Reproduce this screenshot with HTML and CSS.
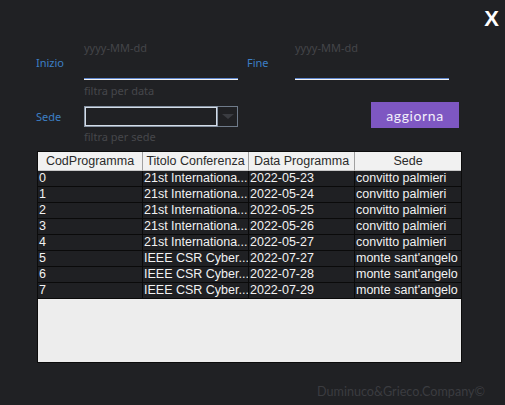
FILE: index.html
```html
<!DOCTYPE html>
<html>
<head>
<meta charset="utf-8">
<link rel="stylesheet" href="styles.css">
</head>
<body>
<div class="page">
  <div class="topbar"><span class="close">X</span></div>

  <div class="row row-dates">
    <div class="label">Inizio</div>
    <div class="field">
      <div class="ph">yyyy-MM-dd</div>
      <div class="input"></div>
      <div class="line"></div>
      <div class="help">filtra per data</div>
    </div>
    <div class="label label-fine">Fine</div>
    <div class="field">
      <div class="ph">yyyy-MM-dd</div>
      <div class="input"></div>
      <div class="line"></div>
    </div>
  </div>

  <div class="row row-sede">
    <div class="label label-sede">Sede</div>
    <div class="field">
      <div class="combo">
        <div class="combo-box"></div>
        <div class="combo-btn"><span class="tri"></span></div>
      </div>
      <div class="help help-sede">filtra per sede</div>
    </div>
    <button class="btn">aggiorna</button>
  </div>

  <div class="table">
    <div class="th">CodProgramma</div>
    <div class="th">Titolo Conferenza</div>
    <div class="th">Data Programma</div>
    <div class="th last">Sede</div>

    <div class="td">0</div><div class="td">21st Internationa...</div><div class="td">2022-05-23</div><div class="td last">convitto palmieri</div>
    <div class="td">1</div><div class="td">21st Internationa...</div><div class="td">2022-05-24</div><div class="td last">convitto palmieri</div>
    <div class="td">2</div><div class="td">21st Internationa...</div><div class="td">2022-05-25</div><div class="td last">convitto palmieri</div>
    <div class="td">3</div><div class="td">21st Internationa...</div><div class="td">2022-05-26</div><div class="td last">convitto palmieri</div>
    <div class="td">4</div><div class="td">21st Internationa...</div><div class="td">2022-05-27</div><div class="td last">convitto palmieri</div>
    <div class="td">5</div><div class="td">IEEE CSR Cyber...</div><div class="td">2022-07-27</div><div class="td last">monte sant'angelo</div>
    <div class="td">6</div><div class="td">IEEE CSR Cyber...</div><div class="td">2022-07-28</div><div class="td last">monte sant'angelo</div>
    <div class="td">7</div><div class="td">IEEE CSR Cyber...</div><div class="td">2022-07-29</div><div class="td last">monte sant'angelo</div>
  </div>

  <div class="footer">Duminuco&amp;Grieco.Company©</div>
</div>
</body>
</html>
```

FILE: styles.css
```css
html, body {
  margin: 0;
  padding: 0;
  background: #202124;
}
.page {
  width: 505px;
  height: 405px;
  background: #202124;
  font-family: "Noto Sans", "DejaVu Sans", sans-serif;
  overflow: hidden;
}
.topbar {
  height: 41px;
  display: flex;
  justify-content: flex-end;
  align-items: flex-start;
  padding-right: 6px;
  box-sizing: border-box;
}
.close {
  margin-top: 6px;
  font-family: "Liberation Sans", Arial, sans-serif;
  font-weight: bold;
  font-size: 22px;
  line-height: 26px;
  color: #ffffff;
}
.row {
  display: flex;
  padding-left: 36px;
}
.label {
  width: 48px;
  font-size: 11px;
  line-height: 14px;
  color: #3d7fc4;
  padding-top: 15px;
}
.label-fine {
  margin-left: 9px;
}
.label-sede {
  padding-top: 8px;
}
.field {
  width: 154px;
  display: flex;
  flex-direction: column;
}
.ph {
  height: 14px;
  font-size: 11px;
  line-height: 14px;
  color: #444549;
}
.input {
  height: 23px;
}
.line {
  height: 2px;
  background: linear-gradient(#5f86cc 0 1px, #f4f4f4 1px 2px);
}
.help {
  margin-top: 4px;
  font-size: 11px;
  line-height: 14px;
  color: #46474b;
}
.help-sede {
  margin-top: 3px;
}
.row-sede {
  margin-top: 4px;
}
.combo {
  margin-top: 4px;
  height: 21px;
  display: flex;
}
.combo-box {
  width: 134px;
  box-sizing: border-box;
  border: 1px solid #8793a3;
  box-shadow: inset 0 0 0 1px #d4dde8;
  background: #202124;
}
.combo-btn {
  width: 20px;
  box-sizing: border-box;
  border: 1px solid #6f7b8a;
  border-left: none;
  display: flex;
  align-items: center;
  justify-content: center;
}
.tri {
  width: 0;
  height: 0;
  border-left: 6px solid transparent;
  border-right: 6px solid transparent;
  border-top: 5px solid #3a3c41;
}
.btn {
  margin-left: auto;
  margin-right: 46px;
  width: 88px;
  height: 26px;
  border: none;
  background: #7e57c2;
  color: #f2eefa;
  font-family: "Lato", "Noto Sans", sans-serif;
  font-size: 14px;
  letter-spacing: 0.6px;
  padding: 0;
  cursor: pointer;
}
.table {
  margin-top: 7px;
  margin-left: 37px;
  width: 425px;
  height: 212px;
  box-sizing: border-box;
  border: 1px solid #0c0c0c;
  background: #ededed;
  display: grid;
  grid-template-columns: 105px 106px 106px 106px;
  grid-template-rows: 19px repeat(8, 16px);
  align-content: start;
  font-family: "Liberation Sans", Arial, sans-serif;
  font-size: 12.5px;
}
.th {
  background: #f1f1f1;
  color: #2a2a2a;
  text-align: center;
  line-height: 18px;
  border-right: 1px solid #a0a0a0;
  border-bottom: 1px solid #c8c8c8;
  white-space: nowrap;
  overflow: hidden;
}
.td {
  background: #1f2023;
  color: #f2f2f2;
  line-height: 15px;
  padding-left: 1px;
  border-right: 1px solid #0a0a0a;
  border-bottom: 1px solid #0a0a0a;
  white-space: nowrap;
  overflow: hidden;
}
.last {
  border-right: none;
}
.footer {
  margin-top: 21px;
  padding-right: 20px;
  text-align: right;
  font-family: "Lato", "Noto Sans", sans-serif;
  font-size: 12.6px;
  color: #3b3c40;
}
```
